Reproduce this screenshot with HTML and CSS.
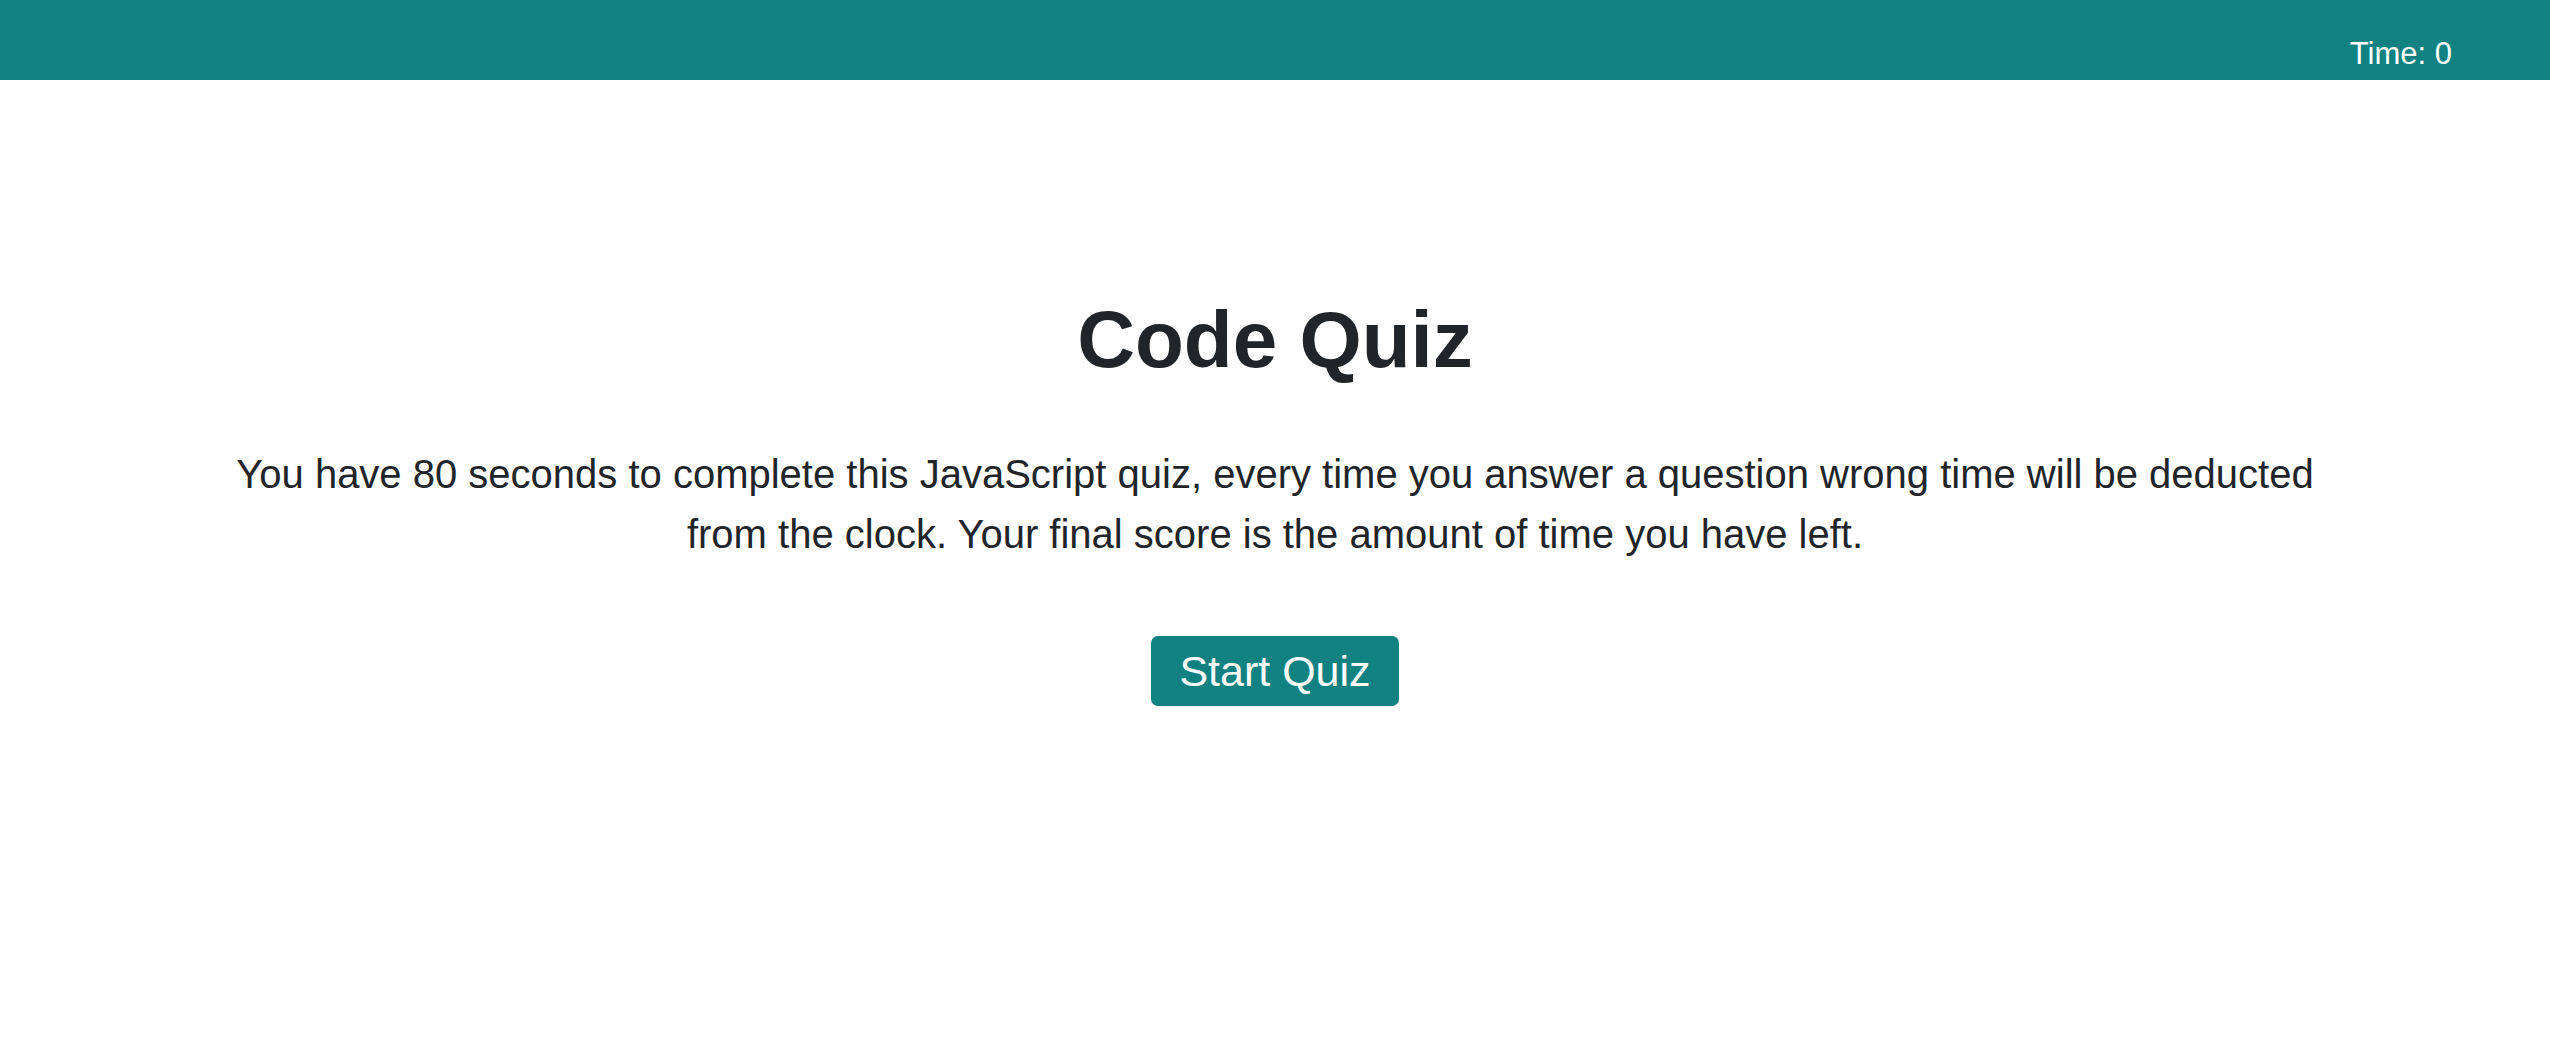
FILE: index.html
```html
<!DOCTYPE html>
<html lang="en">
<head>
<meta charset="utf-8">
<title>Code Quiz</title>
<link rel="stylesheet" href="styles.css">
</head>
<body>
<header class="topbar">
  <div class="timer">Time: <span class="timer-value">0</span></div>
</header>
<main class="intro">
  <h1 class="intro-title">Code Quiz</h1>
  <p class="intro-text">You have 80 seconds to complete this JavaScript quiz, every time you answer a question wrong time will be deducted from the clock. Your final score is the amount of time you have left.</p>
  <button class="start-btn" type="button">Start Quiz</button>
</main>
</body>
</html>
```
FILE: styles.css
```css
html, body {
  margin: 0;
  padding: 0;
  background: #ffffff;
  font-family: "Liberation Sans", Arial, Helvetica, sans-serif;
  color: #212529;
}

.topbar {
  height: 80px;
  box-sizing: border-box;
  background: #128181;
  display: flex;
  justify-content: flex-end;
  align-items: flex-end;
  padding: 0 98px 8px 0;
}

.timer {
  color: #ffffff;
  font-size: 31px;
  line-height: 36px;
}

.intro {
  display: flex;
  flex-direction: column;
  align-items: center;
  padding-top: 212px;
}

.intro-title {
  margin: 0;
  font-size: 80px;
  line-height: 96px;
  font-weight: 700;
}

.intro-text {
  margin: 56px 0 0;
  max-width: 2120px;
  font-size: 40px;
  line-height: 60px;
  text-align: center;
}

.start-btn {
  margin-top: 72px;
  background: #128181;
  color: #ffffff;
  border: none;
  border-radius: 7px;
  font-family: inherit;
  font-size: 43px;
  line-height: 50px;
  padding: 10px 28px;
  cursor: pointer;
}
```
